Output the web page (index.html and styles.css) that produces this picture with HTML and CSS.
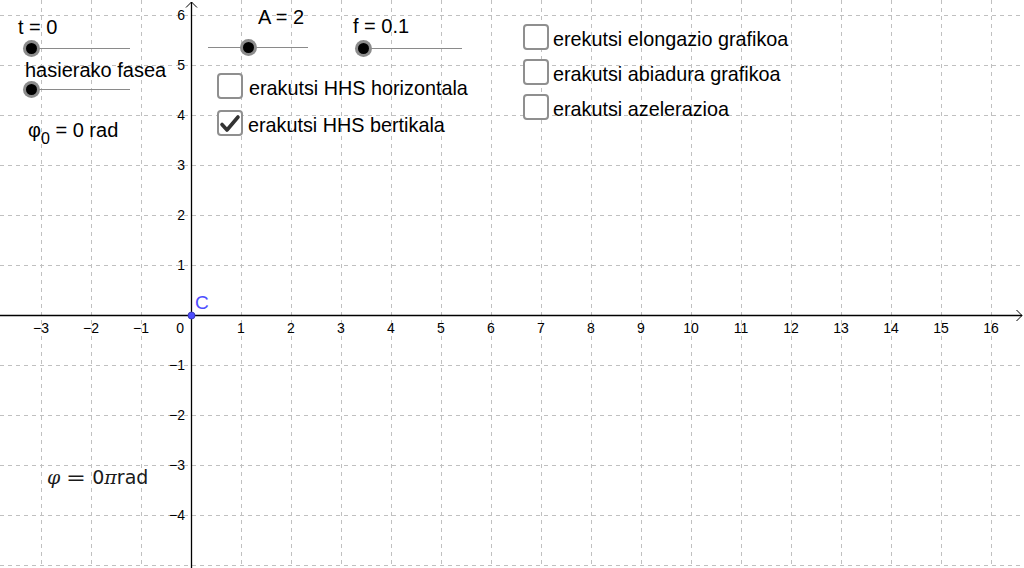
FILE: index.html
```html
<!DOCTYPE html>
<html>
<head>
<meta charset="utf-8">
<link rel="stylesheet" href="styles.css">
</head>
<body>
<div class="applet">
  <svg class="graph" width="1024" height="568" viewBox="0 0 1024 568" xmlns="http://www.w3.org/2000/svg">
    <g class="grid">
      <line x1="41" y1="0" x2="41" y2="568"/>
      <line x1="91" y1="0" x2="91" y2="568"/>
      <line x1="141" y1="0" x2="141" y2="568"/>
      <line x1="241" y1="0" x2="241" y2="568"/>
      <line x1="291" y1="0" x2="291" y2="568"/>
      <line x1="341" y1="0" x2="341" y2="568"/>
      <line x1="391" y1="0" x2="391" y2="568"/>
      <line x1="441" y1="0" x2="441" y2="568"/>
      <line x1="491" y1="0" x2="491" y2="568"/>
      <line x1="541" y1="0" x2="541" y2="568"/>
      <line x1="591" y1="0" x2="591" y2="568"/>
      <line x1="641" y1="0" x2="641" y2="568"/>
      <line x1="691" y1="0" x2="691" y2="568"/>
      <line x1="741" y1="0" x2="741" y2="568"/>
      <line x1="791" y1="0" x2="791" y2="568"/>
      <line x1="841" y1="0" x2="841" y2="568"/>
      <line x1="891" y1="0" x2="891" y2="568"/>
      <line x1="941" y1="0" x2="941" y2="568"/>
      <line x1="991" y1="0" x2="991" y2="568"/>
      <line x1="0" y1="15" x2="1024" y2="15"/>
      <line x1="0" y1="65" x2="1024" y2="65"/>
      <line x1="0" y1="115" x2="1024" y2="115"/>
      <line x1="0" y1="165" x2="1024" y2="165"/>
      <line x1="0" y1="215" x2="1024" y2="215"/>
      <line x1="0" y1="265" x2="1024" y2="265"/>
      <line x1="0" y1="365" x2="1024" y2="365"/>
      <line x1="0" y1="415" x2="1024" y2="415"/>
      <line x1="0" y1="465" x2="1024" y2="465"/>
      <line x1="0" y1="515" x2="1024" y2="515"/>
      <line x1="0" y1="565" x2="1024" y2="565"/>
    </g>
    <g class="axes">
      <line x1="0" y1="315.5" x2="1022" y2="315.5"/>
      <line x1="191.5" y1="2" x2="191.5" y2="568"/>
      <polyline points="1016.5,310 1022,315.5 1016.5,321"/>
      <polyline points="186,7.5 191.5,2 197,7.5"/>
    </g>
    <g class="xlabels">
      <text x="41" y="333">−3</text>
      <text x="91" y="333">−2</text>
      <text x="141" y="333">−1</text>
      <text x="241" y="333">1</text>
      <text x="291" y="333">2</text>
      <text x="341" y="333">3</text>
      <text x="391" y="333">4</text>
      <text x="441" y="333">5</text>
      <text x="491" y="333">6</text>
      <text x="541" y="333">7</text>
      <text x="591" y="333">8</text>
      <text x="641" y="333">9</text>
      <text x="691" y="333">10</text>
      <text x="741" y="333">11</text>
      <text x="791" y="333">12</text>
      <text x="841" y="333">13</text>
      <text x="891" y="333">14</text>
      <text x="941" y="333">15</text>
      <text x="991" y="333">16</text>
    </g>
    <g class="ylabels">
      <text x="184" y="333">0</text>
      <text x="185" y="20">6</text>
      <text x="185" y="70">5</text>
      <text x="185" y="120">4</text>
      <text x="185" y="170">3</text>
      <text x="185" y="220">2</text>
      <text x="185" y="270">1</text>
      <text x="185" y="370">−1</text>
      <text x="185" y="420">−2</text>
      <text x="185" y="470">−3</text>
      <text x="185" y="520">−4</text>
    </g>
    <circle class="pt" cx="191.5" cy="315.5" r="3.5"/>
    <text class="ptlabel" x="195" y="309">C</text>
  </svg>

  <div class="lbl l-t">t = 0</div>
  <div class="track tr-t"><span class="knob"></span></div>

  <div class="lbl l-phase">hasierako fasea</div>
  <div class="track tr-phase"><span class="knob"></span></div>

  <div class="lbl l-a">A = 2</div>
  <div class="track tr-a"><span class="knob" style="left:40%"></span></div>

  <div class="lbl l-f">f = 0.1</div>
  <div class="track tr-f"><span class="knob"></span></div>

  <div class="lbl l-phi0">φ<sub>0</sub> = 0 rad</div>

  <div class="formula"><span class="mi">φ</span><span class="mo">=</span>0<span class="mi pi">π</span>rad</div>

  <div class="cb cb-h"><span class="box"></span><span class="cbtext">erakutsi HHS horizontala</span></div>
  <div class="cb cb-v"><span class="box checked"><svg width="26" height="26" viewBox="0 0 26 26"><path d="M5 14.5 L10 20 L21 7" /></svg></span><span class="cbtext">erakutsi HHS bertikala</span></div>

  <div class="cb cb-e"><span class="box"></span><span class="cbtext">erekutsi elongazio grafikoa</span></div>
  <div class="cb cb-ab"><span class="box"></span><span class="cbtext">erakutsi abiadura grafikoa</span></div>
  <div class="cb cb-az"><span class="box"></span><span class="cbtext">erakutsi azelerazioa</span></div>
</div>
</body>
</html>
```

FILE: styles.css
```css
html, body {
  margin: 0;
  padding: 0;
  background: #ffffff;
}

.applet {
  position: relative;
  width: 1024px;
  height: 568px;
  overflow: hidden;
  font-family: "Liberation Sans", Arial, sans-serif;
  color: #000;
}

.graph {
  position: absolute;
  left: 0;
  top: 0;
  display: block;
}

.grid line {
  stroke: #c0c0c0;
  stroke-width: 1;
  stroke-dasharray: 4 4;
  shape-rendering: crispEdges;
}

.axes line {
  stroke: #000;
  stroke-width: 1.3;
}

.axes polyline {
  fill: none;
  stroke: #000;
  stroke-width: 1;
}

.xlabels text {
  font-family: "Liberation Sans", Arial, sans-serif;
  font-size: 14px;
  text-anchor: middle;
  fill: #000;
}

.ylabels text {
  font-family: "Liberation Sans", Arial, sans-serif;
  font-size: 14px;
  text-anchor: end;
  fill: #000;
}

.pt {
  fill: #4d4dff;
  stroke: #2f2fa8;
  stroke-width: 0.8;
}

.ptlabel {
  font-family: "Liberation Sans", Arial, sans-serif;
  font-size: 19px;
  fill: #4d4dff;
}

.lbl {
  position: absolute;
  font-size: 20px;
  line-height: 20px;
  white-space: nowrap;
}

.l-t { left: 18px; top: 17px; }
.l-phase { left: 25px; top: 60px; }
.l-a { left: 258px; top: 7px; }
.l-f { left: 353px; top: 16px; }
.l-phi0 { left: 28px; top: 120px; }

.l-phi0 sub {
  font-size: 16px;
  vertical-align: -7px;
  line-height: 0;
}

.track {
  position: absolute;
  height: 1px;
  background: #8a8a8a;
}

.tr-t { left: 31px; top: 48px; width: 99px; }
.tr-phase { left: 31px; top: 89px; width: 99px; }
.tr-a { left: 208px; top: 47px; width: 100px; }
.tr-f { left: 363px; top: 48px; width: 99px; }

.knob {
  position: absolute;
  left: 0;
  top: 0;
  width: 11px;
  height: 11px;
  margin-left: -5.5px;
  margin-top: -5.5px;
  border-radius: 50%;
  background: #000;
  box-shadow: 0 0 0 3px #8c8c8c;
}

.formula {
  position: absolute;
  left: 47px;
  top: 467px;
  font-family: "DejaVu Sans", sans-serif;
  font-size: 19px;
  line-height: 20px;
  white-space: nowrap;
  color: #1a1a1a;
}

.formula .mi {
  font-family: "DejaVu Serif", serif;
  font-style: italic;
}

.formula .mo {
  display: inline-block;
  margin: 0 8px 0 8px;
  transform: scaleX(1.25);
}

.cb {
  position: absolute;
  display: flex;
  align-items: center;
  white-space: nowrap;
}

.cb-h { left: 217px; top: 73px; gap: 6px; }
.cb-v { left: 217px; top: 110px; gap: 5px; }
.cb-e { left: 523px; top: 24px; gap: 4px; }
.cb-ab { left: 523px; top: 59px; gap: 4px; }
.cb-az { left: 523px; top: 94px; gap: 4px; }

.box {
  box-sizing: border-box;
  width: 26px;
  height: 26px;
  border: 2px solid #8f8f8f;
  border-radius: 4px;
  background: #fff;
  position: relative;
  flex: none;
}

.box svg {
  position: absolute;
  left: -2px;
  top: -2px;
}

.box svg path {
  fill: none;
  stroke: #333;
  stroke-width: 3.6;
  stroke-linecap: round;
  stroke-linejoin: round;
}

.cbtext {
  font-size: 19.8px;
  line-height: 20px;
  padding-top: 3px;
}
```
